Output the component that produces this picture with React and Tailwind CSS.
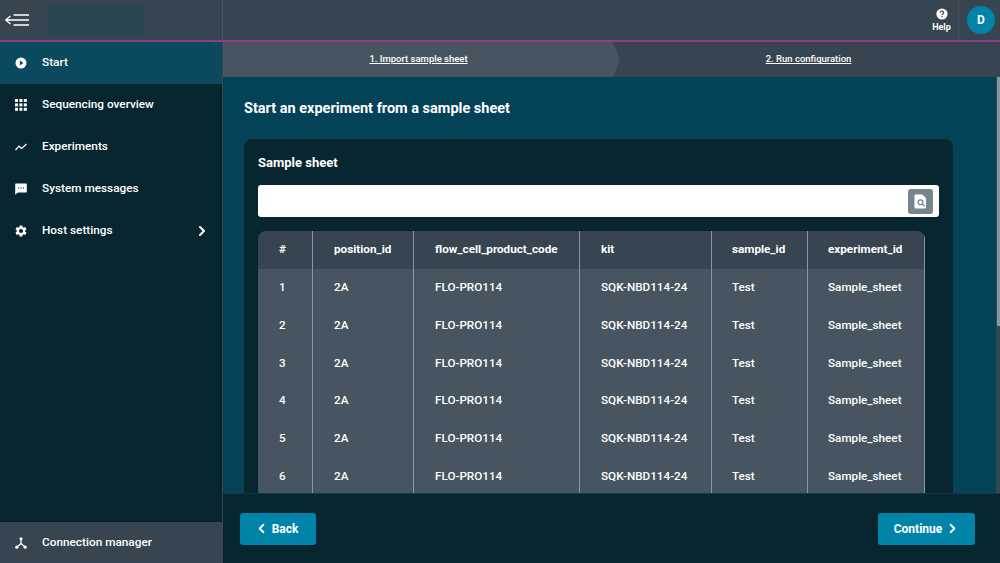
import React from 'react';
import { ChevronLeft, ChevronRight } from 'lucide-react';

const NAV_ITEMS = [
  { label: 'Start', icon: PlayIcon, active: true },
  { label: 'Sequencing overview', icon: GridIcon },
  { label: 'Experiments', icon: TrendIcon },
  { label: 'System messages', icon: MessageIcon },
  { label: 'Host settings', icon: GearIcon, arrow: true },
];

const ROWS = [1, 2, 3, 4, 5, 6];

function PlayIcon() {
  return (
    <svg viewBox="0 0 12 12" className="w-[12px] h-[12px]" fill="#fff">
      <path fillRule="evenodd" d="M6 0.5a5.5 5.5 0 1 0 0 11a5.5 5.5 0 0 0 0-11zM4.8 3.6L8.4 6L4.8 8.4z" />
    </svg>
  );
}

function GridIcon() {
  return (
    <svg viewBox="0 0 12 12" className="w-[12px] h-[12px]" fill="#fff">
      {[0, 4.4, 8.8].map(y => [0, 4.4, 8.8].map(x => (
        <rect key={`${x}-${y}`} x={x} y={y} width="3" height="3" />
      )))}
    </svg>
  );
}

function TrendIcon() {
  return (
    <svg viewBox="0 0 12 12" className="w-[12px] h-[12px]" fill="none" stroke="#fff" strokeWidth="1.2">
      <path d="M0.5 9L4 5.2L6.6 7.4L11.5 3" />
    </svg>
  );
}

function MessageIcon() {
  return (
    <svg viewBox="0 0 12 12" className="w-[12px] h-[12px]" fill="#fff">
      <path fillRule="evenodd" d="M1 0.5h10a0.8 0.8 0 0 1 0.8 0.8v7.4a0.8 0.8 0 0 1-0.8 0.8H3L0.2 11.8V1.3A0.8 0.8 0 0 1 1 0.5zM3 4.4v1.2h1.2V4.4zM5.4 4.4v1.2h1.2V4.4zM7.8 4.4v1.2H9V4.4z" />
    </svg>
  );
}

function GearIcon() {
  return (
    <svg viewBox="0 0 24 24" className="w-[14px] h-[14px] -ml-[1px]" fill="#fff">
      <path d="M19.14 12.94c.04-.3.06-.61.06-.94 0-.32-.02-.64-.07-.94l2.03-1.58a.49.49 0 0 0 .12-.61l-1.92-3.32a.49.49 0 0 0-.59-.22l-2.39.96c-.5-.38-1.03-.7-1.62-.94l-.36-2.54a.48.48 0 0 0-.48-.41h-3.84a.48.48 0 0 0-.47.41l-.36 2.54c-.59.24-1.13.57-1.62.94l-2.39-.96a.48.48 0 0 0-.59.22L2.74 8.87a.48.48 0 0 0 .12.61l2.03 1.58c-.05.3-.09.63-.09.94s.02.64.07.94l-2.03 1.58a.49.49 0 0 0-.12.61l1.92 3.32c.12.22.37.29.59.22l2.39-.96c.5.38 1.03.7 1.62.94l.36 2.54c.05.24.24.41.48.41h3.84c.24 0 .44-.17.47-.41l.36-2.54c.59-.24 1.13-.56 1.62-.94l2.39.96c.22.08.47 0 .59-.22l1.92-3.32a.48.48 0 0 0-.12-.61l-2.01-1.58zM12 15.6A3.6 3.6 0 1 1 12 8.4a3.6 3.6 0 0 1 0 7.2z" />
    </svg>
  );
}

function ConnectionIcon() {
  return (
    <svg viewBox="0 0 12 12" className="w-[12px] h-[12px]" fill="#fff" stroke="#fff">
      <path d="M6 2.5V6.5L2 10M6 6.5L10 10" fill="none" strokeWidth="1.3" />
      <circle cx="6" cy="1.7" r="1.5" stroke="none" />
      <circle cx="1.8" cy="10.2" r="1.6" stroke="none" />
      <circle cx="10.2" cy="10.2" r="1.6" stroke="none" />
    </svg>
  );
}

function MenuBackIcon() {
  return (
    <svg viewBox="0 0 24 12" className="w-[24px] h-[12px]" fill="none" stroke="#fff" strokeWidth="1.3">
      <path d="M5.5 2L0.8 6L5.5 10M0.8 6H24M8.5 1H24M8.5 11H24" />
    </svg>
  );
}

function HelpIcon() {
  return (
    <svg viewBox="0 0 12 12" className="w-[12px] h-[12px]">
      <circle cx="6" cy="6" r="5.6" fill="#fff" />
      <path d="M4.4 4.7a1.6 1.6 0 1 1 2.4 1.4c-.5.3-.8.6-.8 1.1" fill="none" stroke="#36454f" strokeWidth="1.2" />
      <rect x="5.4" y="8" width="1.2" height="1.2" fill="#36454f" />
    </svg>
  );
}

function FileSearchIcon() {
  return (
    <svg viewBox="0 0 14 16" className="w-[13px] h-[15px]">
      <path d="M1.5 0.5H9L13 4.5V14.5a1 1 0 0 1-1 1H1.5a1 1 0 0 1-1-1V1.5a1 1 0 0 1 1-1z" fill="#fff" />
      <circle cx="7" cy="8.8" r="2.6" fill="none" stroke="#76848d" strokeWidth="1.3" />
      <path d="M9 10.8L11.4 13.2" stroke="#76848d" strokeWidth="1.4" />
    </svg>
  );
}

function NavRow({ item }) {
  const Icon = item.icon;
  return (
    <div className={`h-[42px] flex items-center pl-[15px] pr-[12px] ${item.active ? 'bg-[#0b4a5e]' : ''}`}>
      <div className="w-[27px] flex items-center">
        <Icon />
      </div>
      <span className="flex-1 text-[11.8px] font-medium text-white">{item.label}</span>
      {item.arrow && <ChevronRight className="w-[16px] h-[16px] text-white" strokeWidth={3} />}
    </div>
  );
}

function Cell({ children, w, pad = 'pl-[21px]' }) {
  return (
    <div className={`h-full flex items-center shrink-0 border-r border-[#8a969d] ${pad} ${w}`}>
      {children}
    </div>
  );
}

function TableRow({ cells, header }) {
  return (
    <div className={`flex items-center text-[11.7px] text-white ${header ? 'h-[38px] bg-[#36454f] font-bold' : 'h-[37.75px] bg-[#46555f] font-medium'}`}>
      <Cell w="w-[55px]">{cells[0]}</Cell>
      <Cell w="w-[101px]">{cells[1]}</Cell>
      <Cell w="w-[166px]">{cells[2]}</Cell>
      <Cell w="w-[132px]">{cells[3]}</Cell>
      <Cell w="w-[96px]" pad="pl-[20px]">{cells[4]}</Cell>
      <Cell w="w-[117px]" pad="pl-[20px]">{cells[5]}</Cell>
    </div>
  );
}

export default function App() {
  return (
    <div className="w-[1000px] h-[563px] overflow-hidden flex flex-col bg-[#08262f] font-['Roboto','Liberation_Sans',sans-serif] text-white">
      {/* Top bar */}
      <header className="h-[42px] shrink-0 flex bg-[#36454f] border-b-2 border-[#8a3f87]">
        <div className="w-[223px] shrink-0 flex items-center pl-[5px] border-r border-[#4a5862]">
          <MenuBackIcon />
          <div className="ml-[18px] w-[97px] h-[32px] bg-[#2a4651]" />
        </div>
        <div className="flex-1" />
        <div className="flex flex-col items-center justify-center w-[27px] mr-[3px] pt-[1px]">
          <HelpIcon />
          <span className="text-[9px] font-bold leading-[12px] mt-[1px]">Help</span>
        </div>
        <div className="w-[42px] border-l border-[#445159] flex items-center pl-[8px] pr-[5px]">
          <div className="w-[28px] h-[28px] rounded-full bg-[#0084a9] flex items-center justify-center text-[12px] font-bold">D</div>
        </div>
      </header>

      <div className="flex-1 flex min-h-0">
        {/* Sidebar */}
        <aside className="w-[222px] shrink-0 flex flex-col bg-[#08262f]">
          <nav className="flex-1">
            {NAV_ITEMS.map(item => <NavRow key={item.label} item={item} />)}
          </nav>
          <div className="h-[41px] flex items-center pl-[15px] pt-[1px] bg-[#36454f]">
            <div className="w-[27px] flex items-center"><ConnectionIcon /></div>
            <span className="text-[11.8px] font-medium">Connection manager</span>
          </div>
        </aside>

        <main className="flex-1 min-w-0 flex flex-col border-l border-[#36454f]">
          {/* Steps */}
          <div className="h-[35px] shrink-0 flex bg-[#36454f] text-[9.5px] font-medium">
            <div className="w-[397px] pr-[6px] flex items-center justify-center bg-[#46555f] [clip-path:polygon(0_0,390px_0,397px_50%,390px_100%,0_100%)] underline">
              1. Import sample sheet
            </div>
            <div className="flex-1 pr-[3px] flex items-center justify-center underline">2. Run configuration</div>
          </div>

          {/* Scrolling content */}
          <div className="flex-1 min-h-0 overflow-hidden flex bg-[#034257]">
            <div className="flex-1 min-w-0 pl-[21px] pr-[43px] pt-[22px]">
              <h1 className="text-[14.5px] font-bold leading-[19px]">Start an experiment from a sample sheet</h1>
              <section className="mt-[21px] bg-[#08262f] rounded-t-[8px] px-[14px] pt-[15px] pb-[20px]">
                <h2 className="text-[13px] font-bold leading-[17px]">Sample sheet</h2>
                <div className="mt-[14px] h-[32px] bg-white rounded-[3px] flex items-center justify-end pr-[6px]">
                  <div className="w-[25px] h-[25px] rounded-[3px] bg-[#76848d] flex items-center justify-center">
                    <FileSearchIcon />
                  </div>
                </div>
                <div className="mt-[14px] w-[667px] rounded-t-[8px] overflow-hidden">
                  <TableRow header cells={['#', 'position_id', 'flow_cell_product_code', 'kit', 'sample_id', 'experiment_id']} />
                  {ROWS.map(n => (
                    <TableRow key={n} cells={[n, '2A', 'FLO-PRO114', 'SQK-NBD114-24', 'Test', 'Sample_sheet']} />
                  ))}
                </div>
              </section>
            </div>
            <div className="w-[4px] shrink-0 bg-[#36454f] pl-[1px]">
              <div className="h-[249px] bg-[#8b979e]" />
            </div>
          </div>

          {/* Footer */}
          <div className="h-[70px] shrink-0 flex items-center justify-between pl-[17px] pr-[25px] bg-[#08262f] border-t border-[#143845]">
            <button className="w-[76px] h-[32px] pr-[4px] rounded-[3px] bg-[#0084a9] flex items-center justify-center gap-[3px] text-[12px] font-bold">
              <ChevronLeft className="w-[15px] h-[15px]" strokeWidth={3} />
              Back
            </button>
            <button className="w-[97px] h-[32px] pl-[1px] rounded-[3px] bg-[#0084a9] flex items-center justify-center gap-[3px] text-[12px] font-bold">
              Continue
              <ChevronRight className="w-[15px] h-[15px]" strokeWidth={3} />
            </button>
          </div>
        </main>
      </div>
    </div>
  );
}
